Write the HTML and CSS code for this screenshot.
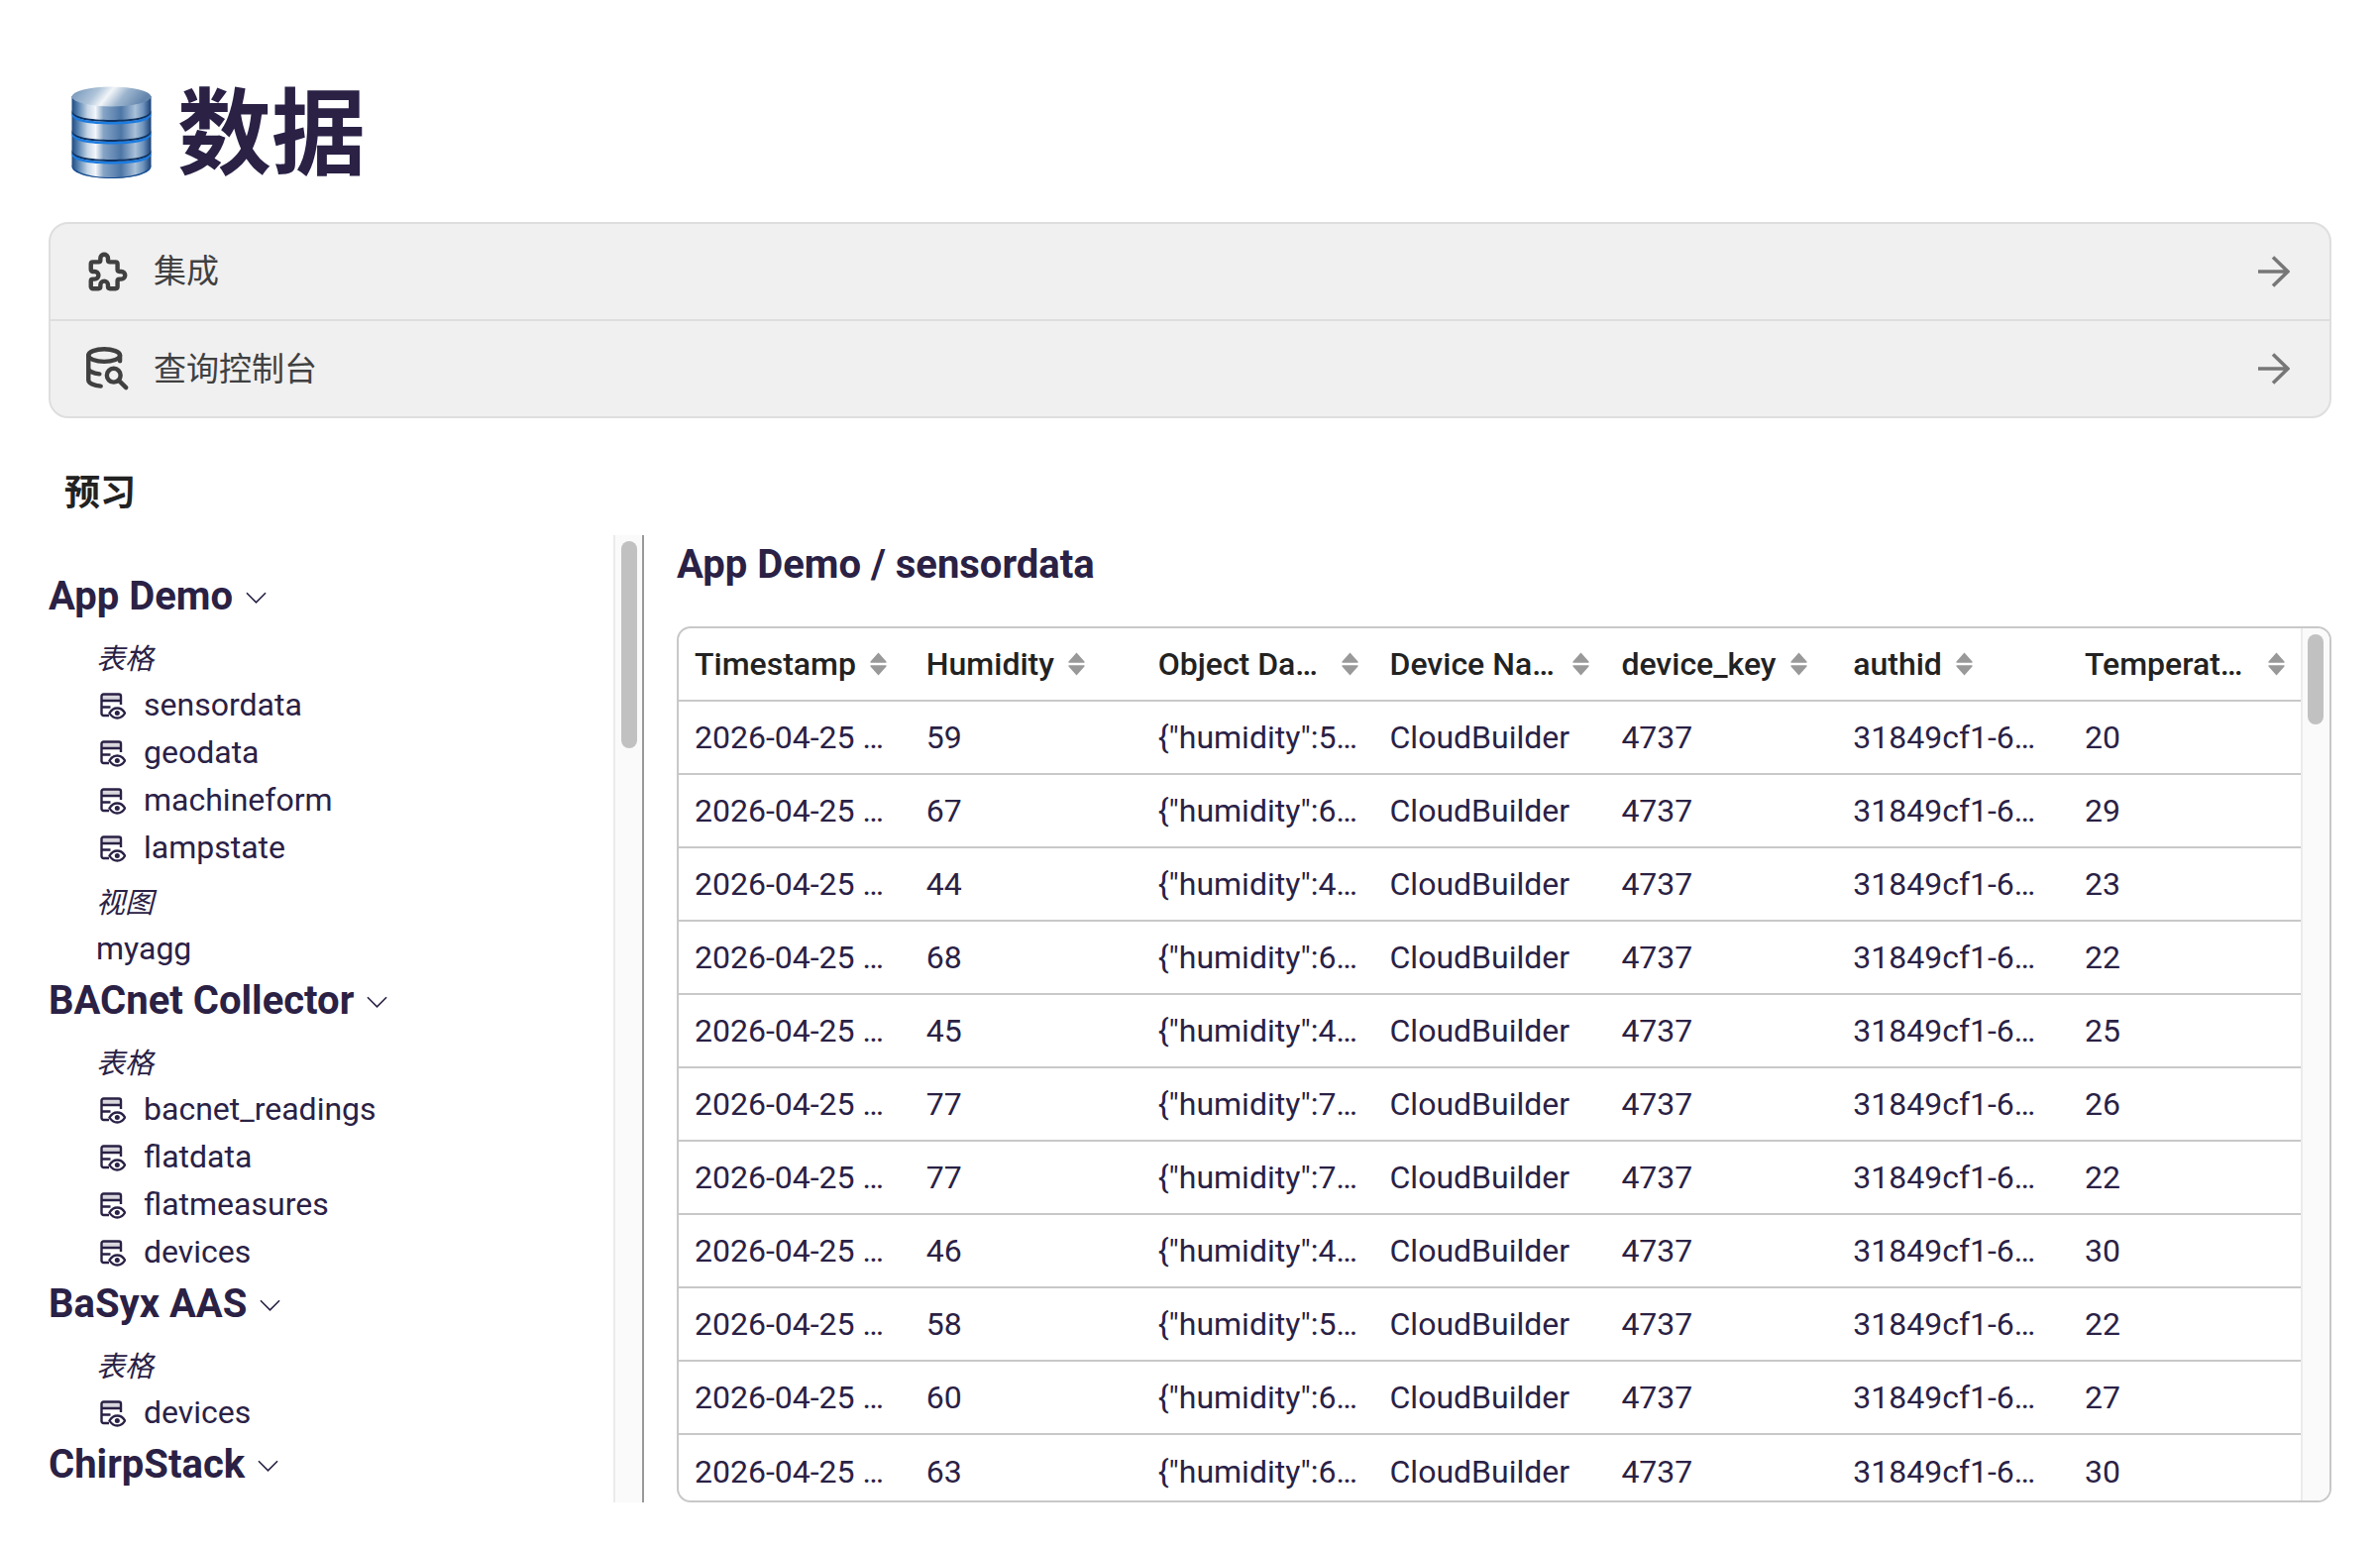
FILE: index.html
```html
<!DOCTYPE html>
<html lang="zh">
<head>
    <meta charset="UTF-8">
    <title>数据</title>
    <link rel="stylesheet" href="styles.css">
</head>
<body>

    <svg class="defs" width="0" height="0">
        <defs>
            <symbol id="table-eye" viewBox="0 0 26 28">
                <path d="M9 23H3.500a2 2 0 0 1-2-2V3.500a2 2 0 0 1 2-2h15.500a2 2 0 0 1 2 2V12M1.500 8h19M1.500 14.500h9" fill="none" stroke="currentColor" stroke-width="2.400"/>
                <rect x="2" y="2" width="18" height="5.500" fill="currentColor" opacity=".18"/>
                <path d="M9.500 20.500c2-3.400 4.800-5 7.800-5s5.800 1.600 7.800 5c-2 3.400-4.800 5-7.800 5s-5.800-1.600-7.800-5z" fill="#fff" stroke="currentColor" stroke-width="2.400"/>
                <circle cx="17.300" cy="20.500" r="2.500" fill="currentColor"/>
            </symbol>
            <symbol id="chev" viewBox="0 0 22 12">
                <path d="M1 1l10 10L21 1" fill="none" stroke="currentColor" stroke-width="1.700"/>
            </symbol>
            <symbol id="sort" viewBox="0 0 17 24">
                <path d="M8.500 0.500L16.500 9.500C16.800 10.300 16.500 10.800 15.800 10.800H1.200C.5 10.800 .2 10.300 .5 9.500zM8.500 23.500L16.500 14.500C16.800 13.700 16.500 13.200 15.800 13.200H1.200C.5 13.200 .2 13.700 .5 14.500z" fill="currentColor"/>
            </symbol>
            <symbol id="arrow" viewBox="0 0 32 32">
                <path d="M0 16h30M15 1.500L30 16L15 30.500" fill="none" stroke="currentColor" stroke-width="3.600"/>
            </symbol>
        </defs>
    </svg>

    <header class="page-title">
        <svg class="db-art" viewBox="0 0 81 94" width="81" height="94">
            <defs>
                <linearGradient id="metal" x1="0" x2="1" y1="0" y2="0">
                    <stop offset="0" stop-color="#1f4a80"/>
                    <stop offset=".07" stop-color="#4f7bab"/>
                    <stop offset=".2" stop-color="#c6d6e6"/>
                    <stop offset=".3" stop-color="#f3f6fa"/>
                    <stop offset=".4" stop-color="#86a4c6"/>
                    <stop offset=".62" stop-color="#4d76a6"/>
                    <stop offset=".8" stop-color="#a9c0d8"/>
                    <stop offset=".9" stop-color="#6d93bc"/>
                    <stop offset="1" stop-color="#173f74"/>
                </linearGradient>
                <linearGradient id="metal-top" x1="0" x2="1" y1="0" y2="0.200">
                    <stop offset="0" stop-color="#6c8fb6"/>
                    <stop offset=".35" stop-color="#aec3d8"/>
                    <stop offset=".52" stop-color="#f2f5f8"/>
                    <stop offset=".72" stop-color="#9cb5ce"/>
                    <stop offset="1" stop-color="#6486ad"/>
                </linearGradient>
            </defs>
            <path d="M0.500 10v70c0 7 18 13 40 13s40-6 40-13V10z" fill="url(#metal)"/>
            <path d="M0.500 79c0 7 18 13 40 13s40-6 40-13v2c0 7-18 12-40 12S.5 88 .5 81z" fill="#12498f"/>
            <path d="M0.500 24c0 7 18 10 40 10s40-3 40-10v2c0 7-18 10-40 10S.5 33 .5 26z" fill="#10325f"/>
            <path d="M0.500 26c0 7 18 10 40 10s40-3 40-10v2.500c0 7-18 10-40 10S.5 35.500 .5 28.500z" fill="#1b7be0"/>
            <path d="M0.500 44c0 7 18 10 40 10s40-3 40-10v2c0 7-18 10-40 10S.5 53 .5 46z" fill="#10325f"/>
            <path d="M0.500 46c0 7 18 10 40 10s40-3 40-10v2.500c0 7-18 10-40 10S.5 55.500 .5 48.500z" fill="#1b7be0"/>
            <path d="M0.500 64c0 7 18 10 40 10s40-3 40-10v2c0 7-18 10-40 10S.5 73 .5 66z" fill="#10325f"/>
            <path d="M0.500 66c0 7 18 10 40 10s40-3 40-10v2.500c0 7-18 10-40 10S.5 75.500 .5 68.500z" fill="#1b7be0"/>
            <ellipse cx="40.500" cy="10.500" rx="40" ry="10" fill="url(#metal-top)"/>
        </svg>
        <h1>数据</h1>
    </header>

    <nav class="link-card">
        <a class="link-row">
            <svg class="link-icon" viewBox="0 0 24 24"><path d="M4 7h3a1 1 0 0 0 1-1V5a2 2 0 0 1 4 0v1a1 1 0 0 0 1 1h3a1 1 0 0 1 1 1v3a1 1 0 0 0 1 1h1a2 2 0 0 1 0 4h-1a1 1 0 0 0-1 1v3a1 1 0 0 1-1 1h-3a1 1 0 0 1-1-1v-1a2 2 0 0 0-4 0v1a1 1 0 0 1-1 1H4a1 1 0 0 1-1-1v-3a1 1 0 0 1 1-1h1a2 2 0 0 0 0-4H4a1 1 0 0 1-1-1V8a1 1 0 0 1 1-1z"/></svg>
            <span class="link-text">集成</span>
            <svg class="link-arrow"><use href="#arrow"/></svg>
        </a>
        <a class="link-row">
            <svg class="link-icon" viewBox="0 0 24 24"><ellipse cx="10" cy="5" rx="8.300" ry="3.300"/><path d="M18.300 5v3M1.700 5v13c0 1.600 2.800 3 6.500 3.200M1.700 11.700c0 1.500 2.400 2.800 5.800 3.100"/><circle cx="15" cy="15.500" r="3.600"/><path d="M17.700 18.200l3.800 3.800"/></svg>
            <span class="link-text">查询控制台</span>
            <svg class="link-arrow"><use href="#arrow"/></svg>
        </a>
    </nav>

    <h2 class="preview-title">预习</h2>

    <div class="preview">
        <aside class="sidebar">
            <div class="tree">
                <h3 class="app-name">App Demo<svg class="chev"><use href="#chev"/></svg></h3>
                <div class="kind">表格</div>
                <div class="item"><svg class="item-icon"><use href="#table-eye"/></svg>sensordata</div>
                <div class="item"><svg class="item-icon"><use href="#table-eye"/></svg>geodata</div>
                <div class="item"><svg class="item-icon"><use href="#table-eye"/></svg>machineform</div>
                <div class="item"><svg class="item-icon"><use href="#table-eye"/></svg>lampstate</div>
                <div class="kind kind-next">视图</div>
                <div class="item">myagg</div>

                <h3 class="app-name">BACnet Collector<svg class="chev"><use href="#chev"/></svg></h3>
                <div class="kind">表格</div>
                <div class="item"><svg class="item-icon"><use href="#table-eye"/></svg>bacnet_readings</div>
                <div class="item"><svg class="item-icon"><use href="#table-eye"/></svg>flatdata</div>
                <div class="item"><svg class="item-icon"><use href="#table-eye"/></svg>flatmeasures</div>
                <div class="item"><svg class="item-icon"><use href="#table-eye"/></svg>devices</div>

                <h3 class="app-name">BaSyx AAS<svg class="chev"><use href="#chev"/></svg></h3>
                <div class="kind">表格</div>
                <div class="item"><svg class="item-icon"><use href="#table-eye"/></svg>devices</div>

                <h3 class="app-name">ChirpStack<svg class="chev"><use href="#chev"/></svg></h3>
            </div>
            <div class="track side-track"><div class="thumb"></div></div>
        </aside>

        <main class="content">
            <h2 class="table-title">App Demo / sensordata</h2>
            <div class="table-box">
                <div class="table-wrap">
                    <table class="data-table">
                        <thead>
                            <tr>
                                <th><div class="head"><span class="head-label">Timestamp</span><svg class="sort"><use href="#sort"/></svg></div></th>
                                <th><div class="head"><span class="head-label">Humidity</span><svg class="sort"><use href="#sort"/></svg></div></th>
                                <th><div class="head head-wide"><span class="head-label">Object Da…</span><svg class="sort"><use href="#sort"/></svg></div></th>
                                <th><div class="head head-wide"><span class="head-label">Device Na…</span><svg class="sort"><use href="#sort"/></svg></div></th>
                                <th><div class="head"><span class="head-label">device_key</span><svg class="sort"><use href="#sort"/></svg></div></th>
                                <th><div class="head"><span class="head-label">authid</span><svg class="sort"><use href="#sort"/></svg></div></th>
                                <th><div class="head head-wide"><span class="head-label">Temperat…</span><svg class="sort"><use href="#sort"/></svg></div></th>
                            </tr>
                        </thead>
                        <tbody>
                            <tr><td>2026-04-25 …</td><td>59</td><td>{"humidity":5…</td><td>CloudBuilder</td><td>4737</td><td>31849cf1-6…</td><td>20</td></tr>
                            <tr><td>2026-04-25 …</td><td>67</td><td>{"humidity":6…</td><td>CloudBuilder</td><td>4737</td><td>31849cf1-6…</td><td>29</td></tr>
                            <tr><td>2026-04-25 …</td><td>44</td><td>{"humidity":4…</td><td>CloudBuilder</td><td>4737</td><td>31849cf1-6…</td><td>23</td></tr>
                            <tr><td>2026-04-25 …</td><td>68</td><td>{"humidity":6…</td><td>CloudBuilder</td><td>4737</td><td>31849cf1-6…</td><td>22</td></tr>
                            <tr><td>2026-04-25 …</td><td>45</td><td>{"humidity":4…</td><td>CloudBuilder</td><td>4737</td><td>31849cf1-6…</td><td>25</td></tr>
                            <tr><td>2026-04-25 …</td><td>77</td><td>{"humidity":7…</td><td>CloudBuilder</td><td>4737</td><td>31849cf1-6…</td><td>26</td></tr>
                            <tr><td>2026-04-25 …</td><td>77</td><td>{"humidity":7…</td><td>CloudBuilder</td><td>4737</td><td>31849cf1-6…</td><td>22</td></tr>
                            <tr><td>2026-04-25 …</td><td>46</td><td>{"humidity":4…</td><td>CloudBuilder</td><td>4737</td><td>31849cf1-6…</td><td>30</td></tr>
                            <tr><td>2026-04-25 …</td><td>58</td><td>{"humidity":5…</td><td>CloudBuilder</td><td>4737</td><td>31849cf1-6…</td><td>22</td></tr>
                            <tr><td>2026-04-25 …</td><td>60</td><td>{"humidity":6…</td><td>CloudBuilder</td><td>4737</td><td>31849cf1-6…</td><td>27</td></tr>
                            <tr><td>2026-04-25 …</td><td>63</td><td>{"humidity":6…</td><td>CloudBuilder</td><td>4737</td><td>31849cf1-6…</td><td>30</td></tr>
                        </tbody>
                    </table>
                </div>
                <div class="track table-track"><div class="thumb"></div></div>
            </div>
        </main>
    </div>

</body>
</html>
```

FILE: styles.css
```css
body {
    margin: 0;
    padding: 0 49px;
    height: 1564px;
    box-sizing: border-box;
    overflow: hidden;
    background-color: #fff;
    color: #2a2145;
    font-family: Roboto, "Noto Sans CJK SC", sans-serif;
}
.defs {
    position: absolute;
}

/* page title */
.page-title {
    display: flex;
    align-items: center;
    height: 96px;
    padding: 86px 0 0 23px;
    gap: 26px;
}
.page-title h1 {
    margin: 0;
    padding-top: 5px;
    font-size: 95px;
    line-height: 96px;
    font-weight: 700;
}
.db-art {
    flex: none;
}

/* link card */
.link-card {
    margin-top: 42px;
    height: 198px;
    box-sizing: border-box;
    background-color: #f0f0f0;
    border: 2px solid #dedede;
    border-radius: 20px;
}
.link-row {
    display: flex;
    align-items: center;
    height: 96px;
    padding: 0 40px 0 35px;
    color: #404040;
    font-size: 33px;
}
.link-row + .link-row {
    height: 98px;
    border-top: 2px solid #dedede;
    box-sizing: border-box;
}
.link-row + .link-row .link-text {
    padding-bottom: 4px;
}
.link-icon {
    width: 46px;
    height: 46px;
    fill: none;
    stroke: #404040;
    stroke-width: 2.300;
    stroke-linecap: round;
    stroke-linejoin: round;
}
.link-text {
    flex: 1;
    margin-left: 23px;
    padding-bottom: 6px;
}
.link-arrow {
    width: 32px;
    height: 32px;
    color: #777;
}

.preview-title {
    margin: 51px 0 0 16px;
    height: 50px;
    font-size: 36px;
    line-height: 50px;
    font-weight: 700;
    color: #222;
}

/* preview */
.preview {
    display: flex;
    height: 976px;
    margin-top: 17px;
}
.sidebar {
    display: flex;
    width: 601px;
    flex: none;
    border-right: 2px solid #999;
    box-sizing: border-box;
    overflow: hidden;
}
.tree {
    flex: 1;
    padding-top: 38px;
}
.app-name {
    display: flex;
    align-items: center;
    gap: 13px;
    margin: 4px 0 0;
    height: 48px;
    font-size: 40px;
    line-height: 48px;
    font-weight: 700;
    white-space: pre;
}
.tree .app-name:first-child {
    margin-top: 0;
}
.chev {
    width: 21px;
    height: 12px;
    margin-top: 2px;
}
.kind {
    margin: 16px 0 0 48px;
    height: 46px;
    font-size: 29px;
    line-height: 46px;
    font-style: italic;
}
.kind-next {
    margin-top: 8px;
}
.item {
    display: flex;
    align-items: center;
    height: 48px;
    box-sizing: border-box;
    padding-bottom: 3px;
    margin-left: 48px;
    font-size: 32px;
}
.item-icon {
    width: 26px;
    height: 28px;
    margin: 4px 18px 0 4px;
}

/* scrollbars */
.track {
    flex: none;
    box-sizing: border-box;
    background-color: #fafafa;
    border-left: 2px solid #ebebeb;
}
.side-track {
    width: 29px;
    padding: 6px 5px 6px 6px;
}
.table-track {
    width: 29px;
    padding: 6px 6px 6px 5px;
}
.thumb {
    background-color: #c1c1c1;
    border-radius: 8px;
}
.side-track .thumb {
    height: 209px;
}
.table-track .thumb {
    height: 91px;
}

/* table */
.content {
    flex: 1;
    min-width: 0;
    padding-left: 33px;
}
.table-title {
    margin: 0;
    height: 60px;
    font-size: 40px;
    line-height: 60px;
    font-weight: 700;
}
.table-box {
    display: flex;
    height: 884px;
    margin-top: 32px;
    box-sizing: border-box;
    border: 2px solid #c8c8c8;
    border-radius: 14px;
    overflow: hidden;
}
.table-wrap {
    flex: 1;
    min-width: 0;
}
.data-table {
    width: 100%;
    table-layout: fixed;
    border-collapse: collapse;
    font-size: 32px;
}
.data-table th,
.data-table td {
    padding: 0 16px;
    border-bottom: 2px solid #c8c8c8;
    box-sizing: border-box;
    white-space: nowrap;
    text-align: left;
    font-weight: 400;
}
.data-table th {
    height: 73px;
    color: #222;
}
.data-table td {
    height: 74px;
}
.data-table tbody tr:last-child td {
    border-bottom: none;
}
.head {
    display: flex;
    align-items: center;
    gap: 14px;
}
.head-wide {
    justify-content: space-between;
}
.head-label {
    font-weight: 500;
}
.sort {
    width: 17px;
    height: 24px;
    flex: none;
    color: #999;
}
```
